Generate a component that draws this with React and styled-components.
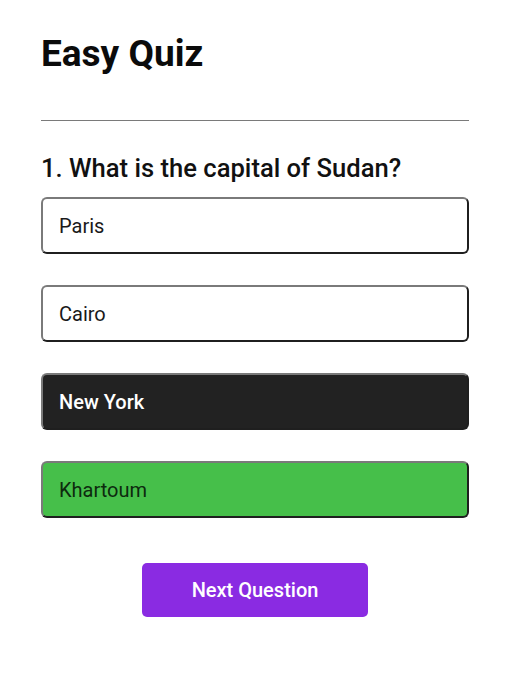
import React from 'react';
import styled, { createGlobalStyle } from 'styled-components';

const GlobalStyle = createGlobalStyle`
  body {
    margin: 0;
    background: #fff;
    font-family: Roboto, "Liberation Sans", sans-serif;
    color: #111;
  }
`;

const Page = styled.div`
  width: 428px;
  padding: 33px 39px 40px 41px;
`;

const Title = styled.h1`
  margin: 0;
  font-size: 37px;
  line-height: 42px;
  font-weight: 700;
  color: #0b0b0b;
`;

const Divider = styled.hr`
  margin: 45px 0 0;
  border: none;
  border-top: 1px solid #7a7a7a;
`;

const Question = styled.h2`
  margin: 33px 0 15px;
  font-size: 25.6px;
  line-height: 28px;
  font-weight: 500;
  color: #111;
`;

const Options = styled.ul`
  list-style: none;
  margin: 0;
  padding: 0;
  display: flex;
  flex-direction: column;
  gap: 31px;
`;

const tones = {
  idle: { bg: '#fff', fg: '#1a1a1a' },
  wrong: { bg: '#222222', fg: '#fff' },
  right: { bg: '#46bf4a', fg: '#0d2a0e' },
};

const Option = styled.li`
  box-sizing: border-box;
  height: 57px;
  display: flex;
  align-items: center;
  padding: 0 16px;
  border: 2px solid;
  border-color: #7a7a7a #1f1f1f #1f1f1f #7a7a7a;
  border-radius: 6px;
  font-size: 20px;
  background: ${p => tones[p.$tone].bg};
  color: ${p => tones[p.$tone].fg};
  font-weight: ${p => (p.$tone === 'wrong' ? 500 : 400)};
`;

const Footer = styled.div`
  display: flex;
  justify-content: center;
  margin-top: 45px;
`;

const NextButton = styled.button`
  width: 226px;
  height: 54px;
  border: none;
  border-radius: 5px;
  background: #8a2be2;
  color: #fff;
  font-family: Roboto, "Liberation Sans", sans-serif;
  font-size: 20px;
  font-weight: 500;
  cursor: pointer;
`;

const options = [
  { text: 'Paris', tone: 'idle' },
  { text: 'Cairo', tone: 'idle' },
  { text: 'New York', tone: 'wrong' },
  { text: 'Khartoum', tone: 'right' },
];

export default function App() {
  return (
    <>
      <GlobalStyle />
      <Page>
        <Title>Easy Quiz</Title>
        <Divider />
        <Question>1. What is the capital of Sudan?</Question>
        <Options>
          {options.map(o => (
            <Option key={o.text} $tone={o.tone}>{o.text}</Option>
          ))}
        </Options>
        <Footer>
          <NextButton type="button">Next Question</NextButton>
        </Footer>
      </Page>
    </>
  );
}
